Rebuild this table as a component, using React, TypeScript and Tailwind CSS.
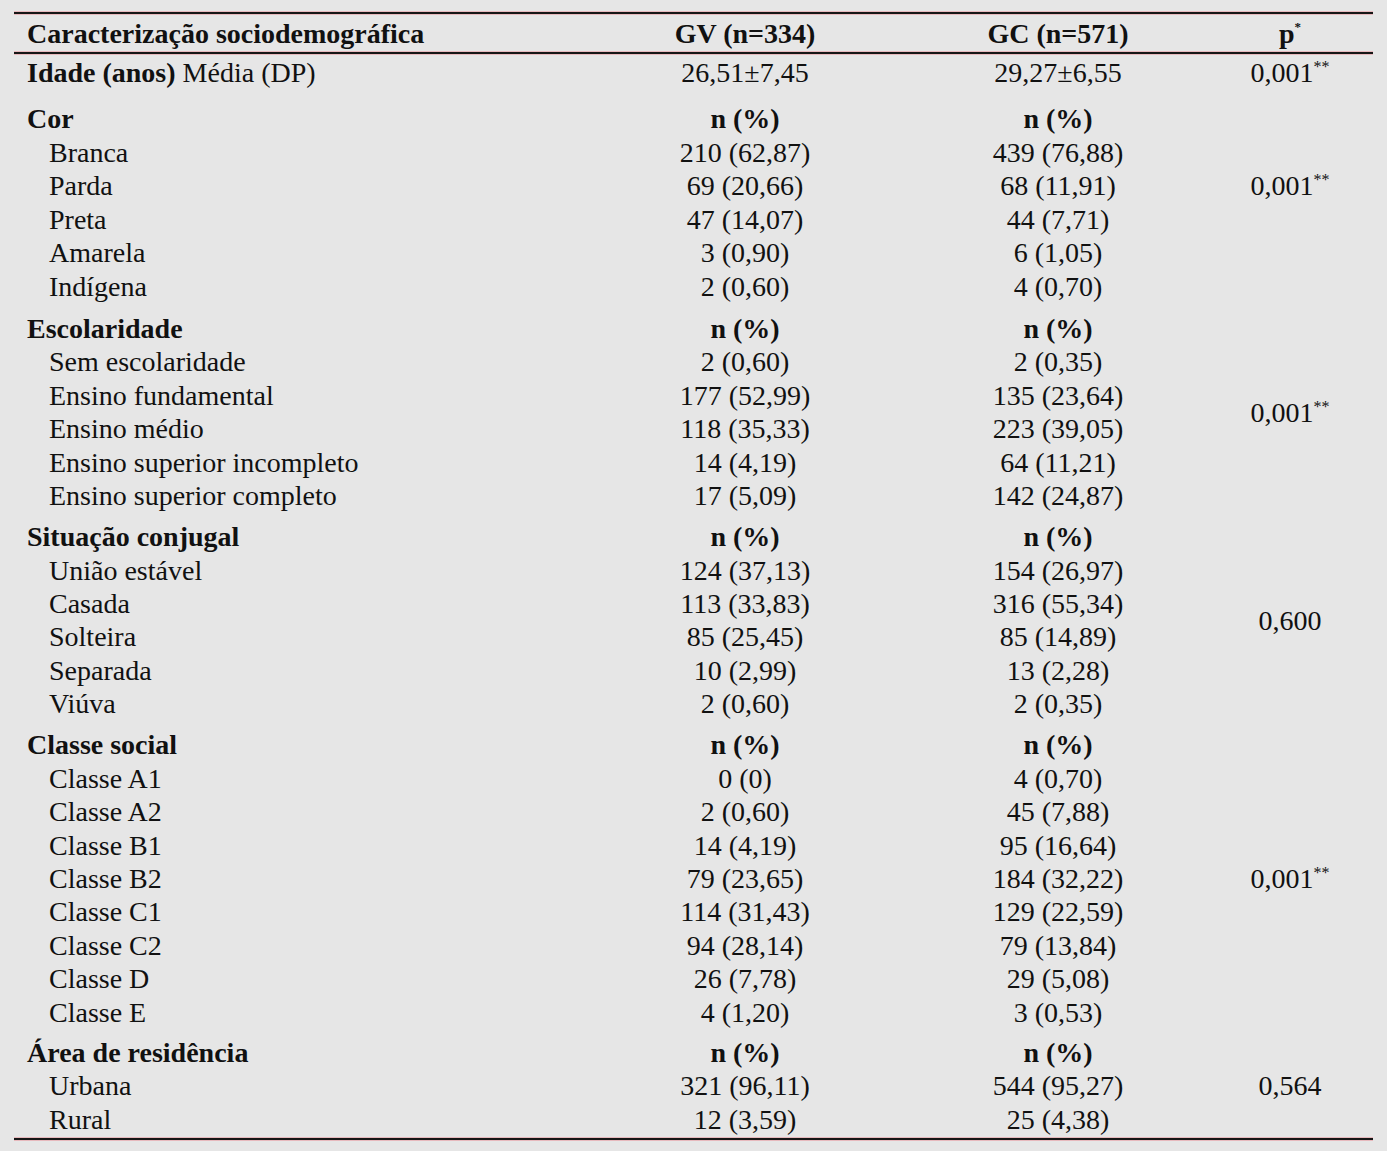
import React from "react";

type Group = {
  title: string;
  mt: string;
  p: string;
  stars: boolean;
  pPos: string;
  rows: [string, string, string][];
};

const groups: Group[] = [
  {
    title: "Cor",
    mt: "mt-[12.5px]",
    p: "0,001",
    stars: true,
    pPos: "col-start-4 row-start-3 row-span-1",
    rows: [
      ["Branca", "210 (62,87)", "439 (76,88)"],
      ["Parda", "69 (20,66)", "68 (11,91)"],
      ["Preta", "47 (14,07)", "44 (7,71)"],
      ["Amarela", "3 (0,90)", "6 (1,05)"],
      ["Indígena", "2 (0,60)", "4 (0,70)"],
    ],
  },
  {
    title: "Escolaridade",
    mt: "mt-[9px]",
    p: "0,001",
    stars: true,
    pPos: "col-start-4 row-start-1 row-span-6",
    rows: [
      ["Sem escolaridade", "2 (0,60)", "2 (0,35)"],
      ["Ensino fundamental", "177 (52,99)", "135 (23,64)"],
      ["Ensino médio", "118 (35,33)", "223 (39,05)"],
      ["Ensino superior incompleto", "14 (4,19)", "64 (11,21)"],
      ["Ensino superior completo", "17 (5,09)", "142 (24,87)"],
    ],
  },
  {
    title: "Situação conjugal",
    mt: "mt-[7.5px]",
    p: "0,600",
    stars: false,
    pPos: "col-start-4 row-start-1 row-span-6",
    rows: [
      ["União estável", "124 (37,13)", "154 (26,97)"],
      ["Casada", "113 (33,83)", "316 (55,34)"],
      ["Solteira", "85 (25,45)", "85 (14,89)"],
      ["Separada", "10 (2,99)", "13 (2,28)"],
      ["Viúva", "2 (0,60)", "2 (0,35)"],
    ],
  },
  {
    title: "Classe social",
    mt: "mt-[7.5px]",
    p: "0,001",
    stars: true,
    pPos: "col-start-4 row-start-1 row-span-9",
    rows: [
      ["Classe A1", "0 (0)", "4 (0,70)"],
      ["Classe A2", "2 (0,60)", "45 (7,88)"],
      ["Classe B1", "14 (4,19)", "95 (16,64)"],
      ["Classe B2", "79 (23,65)", "184 (32,22)"],
      ["Classe C1", "114 (31,43)", "129 (22,59)"],
      ["Classe C2", "94 (28,14)", "79 (13,84)"],
      ["Classe D", "26 (7,78)", "29 (5,08)"],
      ["Classe E", "4 (1,20)", "3 (0,53)"],
    ],
  },
  {
    title: "Área de residência",
    mt: "mt-[6.5px]",
    p: "0,564",
    stars: false,
    pPos: "col-start-4 row-start-1 row-span-3",
    rows: [
      ["Urbana", "321 (96,11)", "544 (95,27)"],
      ["Rural", "12 (3,59)", "25 (4,38)"],
    ],
  },
];

function Rule() {
  return (
    <div className="h-[2px] w-[1359px] bg-[#161616] shadow-[0_1px_0_#e7b9bd,0_-1px_0_#e7b9bd]" />
  );
}

function PVal({ v, stars }: { v: string; stars: boolean }) {
  return (
    <span className="whitespace-nowrap">
      {v}
      {stars && <sup className="relative top-[-10px] align-baseline text-[16px] leading-none">**</sup>}
    </span>
  );
}

const gridCls =
  "grid grid-cols-[586px_290px_336px_128px] auto-rows-[33.45px] leading-[33.45px]";

export default function App() {
  return (
    <div
      className="h-[1151px] w-full bg-[#e6e6e6] pl-[14px] pt-[12px] text-[28px] text-[#111111]"
      style={{ fontFamily: '"Liberation Serif", "Times New Roman", serif' }}
    >
      <Rule />
      <div className={`${gridCls} pt-[3px] pb-[1.5px] font-bold`}>
        <div className="whitespace-nowrap pl-[13px]">Caracterização sociodemográfica</div>
        <div className="text-center whitespace-nowrap">GV (n=334)</div>
        <div className="text-center whitespace-nowrap">GC (n=571)</div>
        <div className="text-center whitespace-nowrap">
          p<sup className="relative top-[-12px] align-baseline text-[13px] leading-none">*</sup>
        </div>
      </div>
      <Rule />
      <div className={`${gridCls} mt-[2.5px]`}>
        <div className="whitespace-nowrap pl-[13px]">
          <span className="font-bold">Idade (anos)</span> Média (DP)
        </div>
        <div className="text-center whitespace-nowrap">26,51±7,45</div>
        <div className="text-center whitespace-nowrap">29,27±6,55</div>
        <div className="text-center">
          <PVal v="0,001" stars />
        </div>
      </div>
      {groups.map((g) => (
        <div key={g.title} className={`${gridCls} ${g.mt}`}>
          <div className={`${g.pPos} flex items-center justify-center`}>
            <PVal v={g.p} stars={g.stars} />
          </div>
          <div className="col-start-1 whitespace-nowrap pl-[13px] font-bold">{g.title}</div>
          <div className="col-start-2 text-center font-bold">n (%)</div>
          <div className="col-start-3 text-center font-bold">n (%)</div>
          {g.rows.map((r) => (
            <React.Fragment key={r[0]}>
              <div className="col-start-1 whitespace-nowrap pl-[35px]">{r[0]}</div>
              <div className="col-start-2 whitespace-nowrap text-center">{r[1]}</div>
              <div className="col-start-3 whitespace-nowrap text-center">{r[2]}</div>
            </React.Fragment>
          ))}
        </div>
      ))}
      <div className="mt-[2px]">
        <Rule />
      </div>
    </div>
  );
}
